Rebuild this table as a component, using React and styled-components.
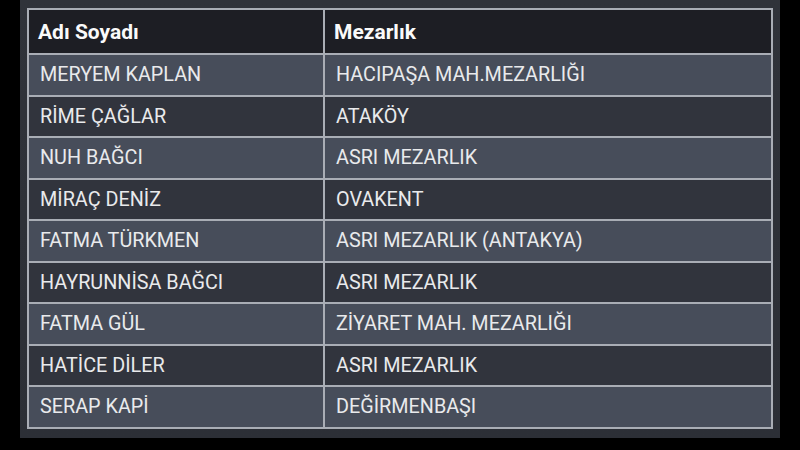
import React from "react";
import styled, { createGlobalStyle } from "styled-components";

const Global = createGlobalStyle`
  html, body { margin: 0; padding: 0; background: #000; }
  body { width: 800px; height: 450px; overflow: hidden; font-family: Roboto, "Noto Sans", sans-serif; }
`;

const Page = styled.div`
  width: 800px;
  height: 450px;
  background: #000;
  padding: 0 20px 12px 20px;
  box-sizing: border-box;
  display: flex;
`;

const Panel = styled.div`
  flex: 1;
  background: linear-gradient(180deg, #30333a 0%, #2c2f36 100%);
  padding: 8px 6px 10px 7px;
  box-sizing: border-box;
`;

const Table = styled.table`
  width: 746px;
  border-collapse: collapse;
  table-layout: fixed;
  border: 2px solid #a9adb5;
`;

const HeadCell = styled.th`
  background: #1d1e24;
  color: #fafafa;
  font-weight: 700;
  font-size: 21px;
  text-align: left;
  height: 45px;
  padding: 0 0 0 9px;
  border: 2px solid #a9adb5;
  box-sizing: border-box;
`;

const Row = styled.tr`
  background: ${(p) => (p.$odd ? "#474d5a" : "#31343d")};
`;

const Cell = styled.td`
  color: #e9eaec;
  font-size: 19.8px;
  height: 41.5px;
  padding: 0 0 0 11px;
  border: 2px solid #a9adb5;
  box-sizing: border-box;
  white-space: nowrap;
`;

const rows = [
  ["MERYEM KAPLAN", "HACIPAŞA MAH.MEZARLIĞI"],
  ["RİME ÇAĞLAR", "ATAKÖY"],
  ["NUH BAĞCI", "ASRI MEZARLIK"],
  ["MİRAÇ DENİZ", "OVAKENT"],
  ["FATMA TÜRKMEN", "ASRI MEZARLIK (ANTAKYA)"],
  ["HAYRUNNİSA BAĞCI", "ASRI MEZARLIK"],
  ["FATMA GÜL", "ZİYARET MAH. MEZARLIĞI"],
  ["HATİCE DİLER", "ASRI MEZARLIK"],
  ["SERAP KAPİ", "DEĞİRMENBAŞI"],
];

export default function App() {
  return (
    <>
      <Global />
      <Page>
        <Panel>
          <Table>
            <colgroup>
              <col style={{ width: 296 }} />
              <col />
            </colgroup>
            <thead>
              <tr>
                <HeadCell>Adı Soyadı</HeadCell>
                <HeadCell>Mezarlık</HeadCell>
              </tr>
            </thead>
            <tbody>
              {rows.map((r, i) => (
                <Row key={i} $odd={i % 2 === 0}>
                  <Cell>{r[0]}</Cell>
                  <Cell>{r[1]}</Cell>
                </Row>
              ))}
            </tbody>
          </Table>
        </Panel>
      </Page>
    </>
  );
}
